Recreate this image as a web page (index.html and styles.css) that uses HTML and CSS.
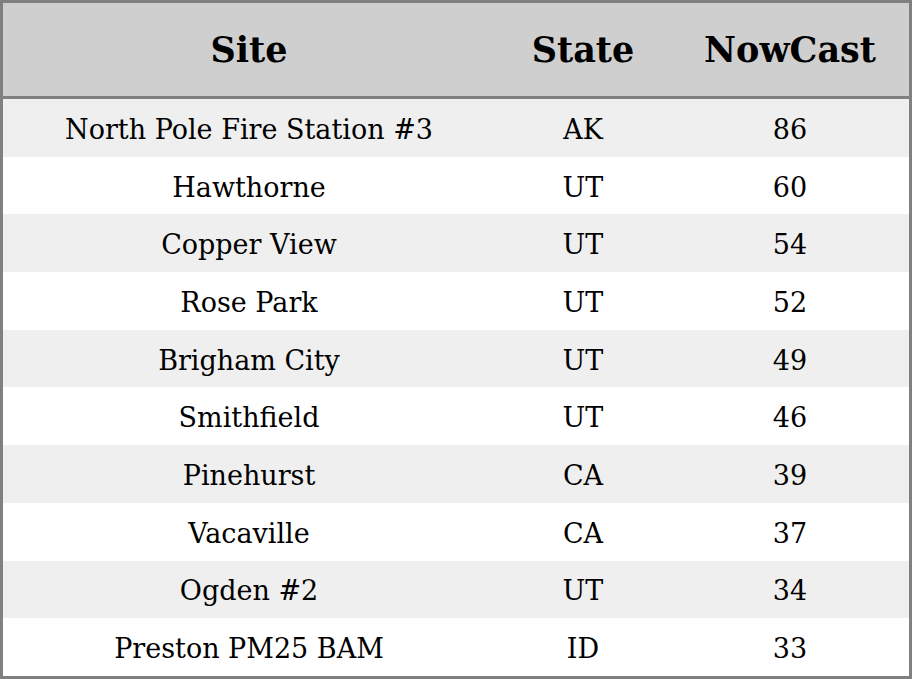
FILE: index.html
```html
<!DOCTYPE html>
<html>
<head>
<meta charset="utf-8">
<link rel="stylesheet" href="styles.css">
</head>
<body>
<table class="aq">
  <thead>
    <tr><th class="c-site">Site</th><th class="c-state">State</th><th class="c-now">NowCast</th></tr>
  </thead>
  <tbody>
    <tr><td>North Pole Fire Station #3</td><td>AK</td><td>86</td></tr>
    <tr><td>Hawthorne</td><td>UT</td><td>60</td></tr>
    <tr><td>Copper View</td><td>UT</td><td>54</td></tr>
    <tr><td>Rose Park</td><td>UT</td><td>52</td></tr>
    <tr><td>Brigham City</td><td>UT</td><td>49</td></tr>
    <tr><td>Smithfield</td><td>UT</td><td>46</td></tr>
    <tr><td>Pinehurst</td><td>CA</td><td>39</td></tr>
    <tr><td>Vacaville</td><td>CA</td><td>37</td></tr>
    <tr><td>Ogden #2</td><td>UT</td><td>34</td></tr>
    <tr><td>Preston PM25 BAM</td><td>ID</td><td>33</td></tr>
  </tbody>
</table>
</body>
</html>
```
FILE: styles.css
```css
html, body {
  margin: 0;
  padding: 0;
  background: #ffffff;
}
.aq {
  width: 912px;
  height: 679px;
  border: 3px solid #808080;
  border-collapse: separate;
  border-spacing: 0;
  font-family: "DejaVu Serif", serif;
  color: #000;
  table-layout: fixed;
}
.aq th {
  background: #cfcfcf;
  height: 93px;
  padding: 0;
  font-size: 35px;
  font-weight: bold;
  text-align: center;
  border-bottom: 3px solid #808080;
}
.c-site { width: 492px; }
.c-state { width: 176px; }
.c-now { width: 238px; }
.aq td {
  padding: 3px 0 0;
  height: 54.7px;
  font-size: 27px;
  text-align: center;
}
.aq tbody tr:nth-child(odd) td {
  background: #efefef;
}
```
